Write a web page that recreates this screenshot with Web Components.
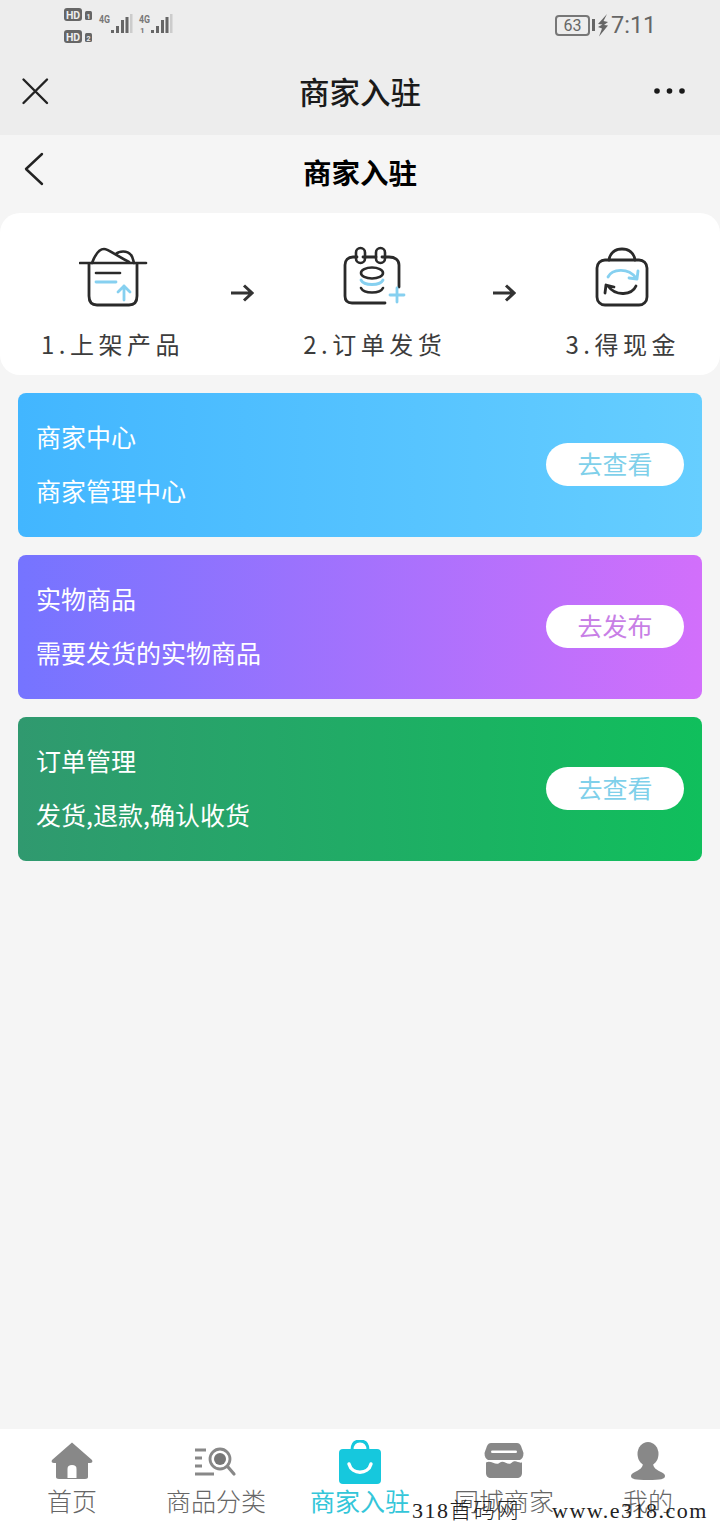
<!DOCTYPE html>
<html><head><meta charset="utf-8">
<style>
html,body{margin:0;padding:0;background:#f5f5f5}
body{width:720px;height:1522px;overflow:hidden;font-family:"Noto Sans CJK SC","Noto Sans",sans-serif;display:flex;flex-direction:column;position:relative}
app-main{flex:1}
</style></head><body>
<status-bar></status-bar>
<top-bar></top-bar>
<page-header></page-header>
<app-main>
<step-card></step-card>
<action-card style="--c1:#42b6ff;--c2:#66ceff;--b:#7fd0ea" title-text="商家中心" sub="商家管理中心" btn="去查看"></action-card>
<action-card style="--c1:#7574ff;--c2:#d26ffb;--b:#c87fe6" title-text="实物商品" sub="需要发货的实物商品" btn="去发布"></action-card>
<action-card style="--c1:#30996f;--c2:#10bf5c;--b:#7fd0ea" title-text="订单管理" sub="发货,退款,确认收货" btn="去查看"></action-card>
</app-main>
<tab-bar></tab-bar>
<water-mark></water-mark>
<script>
function def(name,html){customElements.define(name,class extends HTMLElement{connectedCallback(){if(this.shadowRoot)return;const r=this.attachShadow({mode:'open'});r.innerHTML=typeof html==='function'?html(this):html;}})}
def('status-bar',`<style>
:host{display:block;height:52px;background:#ededed;position:relative;color:#666;font-family:Roboto,sans-serif}
.l{position:absolute;left:63px;top:7px}
.r{position:absolute;left:555px;top:10px;display:flex;align-items:center}
.t{font-size:23.5px;line-height:30px;color:#666;margin-left:2px}
.bat{box-sizing:border-box;width:35px;height:21px;border:2px solid #777;border-radius:4px;font-size:16px;line-height:17px;text-align:center;color:#666}
svg text{font-family:"Roboto",sans-serif}
</style>
<svg class="l" width="112" height="38" viewBox="0 0 112 38">
<rect x="1" y="1" width="18" height="13" rx="3" fill="#666"/><text x="10" y="11.5" font-size="10.5" font-weight="700" fill="#eee" text-anchor="middle">HD</text>
<rect x="22" y="4" width="7" height="9" rx="1.5" fill="#666"/><text x="25.5" y="11.5" font-size="7" font-weight="700" fill="#eee" text-anchor="middle">1</text>
<rect x="1" y="23" width="18" height="13" rx="3" fill="#666"/><text x="10" y="33.5" font-size="10.5" font-weight="700" fill="#eee" text-anchor="middle">HD</text>
<rect x="22" y="26" width="7" height="9" rx="1.5" fill="#666"/><text x="25.5" y="33.5" font-size="7" font-weight="700" fill="#eee" text-anchor="middle">2</text>
<text x="36" y="16" font-size="11" font-weight="700" fill="#777" textLength="11" lengthAdjust="spacingAndGlyphs">4G</text>
<g fill="#666"><rect x="48" y="23" width="3" height="3"/><rect x="53" y="19" width="3" height="7"/><rect x="58" y="13" width="3" height="13"/><rect x="62.500" y="10" width="3" height="16"/></g><rect x="67" y="7" width="2.500" height="19" fill="#ccc"/>
<text x="76" y="16" font-size="11" font-weight="700" fill="#777" textLength="11" lengthAdjust="spacingAndGlyphs">4G</text>
<text x="77" y="26" font-size="8" font-weight="700" fill="#777">1</text>
<g fill="#666"><rect x="88" y="23" width="3" height="3"/><rect x="93" y="19" width="3" height="7"/><rect x="98" y="13" width="3" height="13"/><rect x="102.500" y="10" width="3" height="16"/></g><rect x="107" y="7" width="2.500" height="19" fill="#ccc"/>
</svg>
<div class="r"><div class="bat">63</div>
<svg width="4" height="12" style="margin-left:2px"><rect width="3" height="12" fill="#666"/></svg>
<svg width="12" height="24" viewBox="0 0 12 24" style="margin-left:1px"><path d="M10 1 L1 11 L5.500 11.500 L1 14 L5 15.500 L2 23.500 L11 12.500 L7 12 L11 9 L6.500 8Z" fill="#666"/></svg>
<div class="t">7:11</div></div>`);
def('top-bar',`<style>
:host{display:flex;height:83px;background:#ededed;position:relative;align-items:center;justify-content:center;box-sizing:border-box;padding-bottom:6px}
.h{font-size:30.500px;font-weight:500;color:#1a1a1a;line-height:40px}
svg{position:absolute}
</style>
<svg style="left:21px;top:25px" width="28" height="28" viewBox="0 0 28 28"><path d="M2.500 2.500L26 26M26 2.500L2.500 26" stroke="#222" stroke-width="2.400" stroke-linecap="round"/></svg>
<div class="h">商家入驻</div>
<svg style="left:652px;top:33px" width="36" height="12"><circle cx="5" cy="6" r="2.800" fill="#1a1a1a"/><circle cx="17.500" cy="6" r="2.800" fill="#1a1a1a"/><circle cx="30" cy="6" r="2.800" fill="#1a1a1a"/></svg>`);
def('page-header',`<style>
:host{display:flex;height:78px;background:#f5f5f5;position:relative;justify-content:center;box-sizing:border-box;padding-top:17px}
.h{font-size:28.500px;font-weight:700;color:#000;line-height:40px}
svg{position:absolute;left:23px;top:17px}
</style>
<svg width="22" height="34" viewBox="0 0 22 34"><path d="M19 2L3 17L19 32" fill="none" stroke="#222" stroke-width="2.400" stroke-linecap="round" stroke-linejoin="round"/></svg>
<div class="h">商家入驻</div>`);
const ar=`<svg class="ar" width="24" height="20" viewBox="0 0 24 20"><path d="M1 10H22M14 2.500L22 10L14 17.500" fill="none" stroke="#333" stroke-width="3" stroke-linejoin="miter"/></svg>`;
def('step-card',`<style>
:host{display:flex;height:162px;background:#fff;border-radius:20px;box-sizing:border-box;padding:0 43px 0 41px;justify-content:space-between;align-items:flex-start}
.s{display:flex;flex-direction:column;align-items:center;padding-top:33px}
.s svg{display:block;height:64px}
.lab{font-size:24px;line-height:34px;color:#3c3c3c;letter-spacing:4.500px;margin-top:17px;white-space:nowrap;margin-right:-3px}
.ar{margin-top:70px;flex:none}
</style>
<div class="s"><svg width="70" height="64" viewBox="0 0 70 64" fill="none" stroke-linecap="round" stroke-linejoin="round" style="transform:translateX(3px)">
<path d="M1 17H67" stroke="#2a2a2a" stroke-width="2.600"/>
<path d="M13 17C16 9 20 3 25 3C29 3 35 8 50 16M37 8C40 5 48 4 52 9C54 11 54 14 55 17" stroke="#2a2a2a" stroke-width="2.600"/>
<path d="M10 18V50C10 56 13 59 18 59H50C55 59 58 56 58 50V18" stroke="#2a2a2a" stroke-width="2.800"/>
<path d="M17 27H41" stroke="#2a2a2a" stroke-width="2.600"/>
<path d="M17 36H37" stroke="#86d0f0" stroke-width="2.800"/>
<path d="M45 54V40M39 46L45 40L51 46" stroke="#86d0f0" stroke-width="2.800"/></svg>
<div class="lab">1.上架产品</div></div>
${ar}
<div class="s"><svg width="66" height="64" viewBox="0 0 66 64" fill="none" stroke-linecap="round" stroke-linejoin="round" style="transform:translateX(2px)">
<path d="M43 57H10C5 57 3 54 3 50V19C3 14 6 11 11 11H15M34 11H21M40 11H47C53 11 57 14 57 19V41" stroke="#2a2a2a" stroke-width="2.800"/>
<rect x="14" y="2" width="9" height="15" rx="4.500" stroke="#2a2a2a" stroke-width="2.600"/><rect x="34" y="2" width="9" height="15" rx="4.500" stroke="#2a2a2a" stroke-width="2.600"/>
<ellipse cx="30" cy="27" rx="11" ry="5.500" stroke="#2a2a2a" stroke-width="2.600"/>
<path d="M19 34C22 40 38 40 41 34" stroke="#86d0f0" stroke-width="2.800"/>
<path d="M19 42C22 48 38 48 41 42" stroke="#2a2a2a" stroke-width="2.600"/>
<path d="M55 42V56M48 49H62" stroke="#86d0f0" stroke-width="2.800"/></svg>
<div class="lab">2.订单发货</div></div>
${ar}
<div class="s"><svg width="56" height="64" viewBox="0 0 56 64" fill="none" stroke-linecap="round" stroke-linejoin="round" style="transform:translate(1px,1px)">
<path d="M15 13C16 6 21 2 28 2C35 2 40 6 41 13" stroke="#2a2a2a" stroke-width="2.800"/>
<rect x="3" y="13" width="50" height="45" rx="8" stroke="#2a2a2a" stroke-width="2.800"/>
<path d="M14 30C18 22 34 20 42 31M44 24L43 32L35 31" stroke="#86d0f0" stroke-width="2.800"/>
<path d="M42 39C38 48 22 50 14 39M11 46L12 38L20 40" stroke="#2a2a2a" stroke-width="2.800"/></svg>
<div class="lab">3.得现金</div></div>`);
def('action-card',h=>`<style>
:host{display:flex;height:144px;margin:18px 18px 0;border-radius:8px;background:linear-gradient(90deg,var(--c1),var(--c2));box-sizing:border-box;padding:0 18px 0 19px;justify-content:space-between;align-items:center;color:#fff}
.txt{font-size:25px;line-height:34px;display:flex;flex-direction:column;gap:20px;margin-bottom:5px;margin-left:-1px}
.btn{box-sizing:border-box;width:138px;height:43px;border-radius:22px;background:#fff;color:var(--b);font-size:25px;line-height:40px;text-align:center;margin-top:-1px}
</style>
<div class="txt"><div>${h.getAttribute('title-text')}</div><div>${h.getAttribute('sub')}</div></div>
<div class="btn">${h.getAttribute('btn')}</div>`);
def('tab-bar',`<style>
:host{display:flex;height:93px;background:#fff;flex:none}
.t{flex:1;display:flex;flex-direction:column;align-items:center;color:#666;font-size:25px;line-height:34px;font-weight:300;box-sizing:border-box;padding-top:12px}
.t svg{display:block;height:42px}
.on{color:#33c6d9;font-weight:400}
</style>
<div class="t"><svg width="44" height="42" viewBox="0 0 44 42"><path d="M22 1.500L42 19C43 21 42 22 40 22H38V36C38 37 37 38 35 38H9C7 38 6 37 6 36V22H4C2 22 1 21 2 19Z" fill="#888"/><path d="M17.500 37V28C17.500 25 19 24 22 24C25 24 26.500 25 26.500 28V37Z" fill="#fff"/></svg>首页</div>
<div class="t"><svg width="44" height="42" viewBox="0 0 44 42" fill="none" style="transform:translateY(4px)"><path d="M1 5H12M1 13H8M1 21H8M1 29H20" stroke="#888" stroke-width="2.800"/><circle cx="26" cy="14" r="10" stroke="#888" stroke-width="2.800"/><circle cx="26" cy="14" r="6" fill="#777"/><path d="M34 22L40 29" stroke="#888" stroke-width="3.200" stroke-linecap="round"/></svg>商品分类</div>
<div class="t on"><svg width="44" height="44" viewBox="0 0 44 44" style="height:44px;margin-top:-1px;margin-bottom:-1px"><path d="M14 10C14 4 17 1 22 1C27 1 30 4 30 10" fill="none" stroke="#16c8dd" stroke-width="3"/><rect x="1" y="9" width="42" height="35" rx="4" fill="#16c8dd"/><path d="M11 24C14 35 30 35 33 24" fill="none" stroke="#fff" stroke-width="3.400" stroke-linecap="round"/></svg>商家入驻</div>
<div class="t"><svg width="40" height="42" viewBox="0 0 40 42"><path d="M7 2H33C35 2 36 3 37 5L39.500 12C39.500 16 38 18 36 19H4C2 18 0.500 16 0.500 12L3 5C4 3 5 2 7 2Z" fill="#888"/><rect x="7" y="9.500" width="26" height="2.600" rx="1.300" fill="#fff"/><path d="M2 21.500C7 18.500 12 25.500 16 21.500C20 18.500 24 25.500 28 21.500C32 18.500 34 22.500 38 21.500V32C38 35 36 37 33 37H7C4 37 2 35 2 32Z" fill="#888"/></svg>同城商家</div>
<div class="t"><svg width="36" height="42" viewBox="0 0 36 42"><ellipse cx="18" cy="13" rx="10.500" ry="12" fill="#888"/><path d="M13 22C13 27 9 29 5 31C2 32 1 34 1 35C1 38 5 39 18 39C31 39 35 38 35 35C35 34 34 32 31 31C27 29 23 27 23 22Z" fill="#888"/></svg>我的</div>`);
def('water-mark',`<style>
:host{position:absolute;left:412px;top:1497px;font-family:"Liberation Serif","Noto Sans CJK SC",serif;font-size:22px;line-height:28px;color:#222;white-space:nowrap;letter-spacing:1.500px;font-weight:300}
span{margin-left:32px}
</style>318首码网<span>www.e318.com</span>`);
</script>
</body></html>
